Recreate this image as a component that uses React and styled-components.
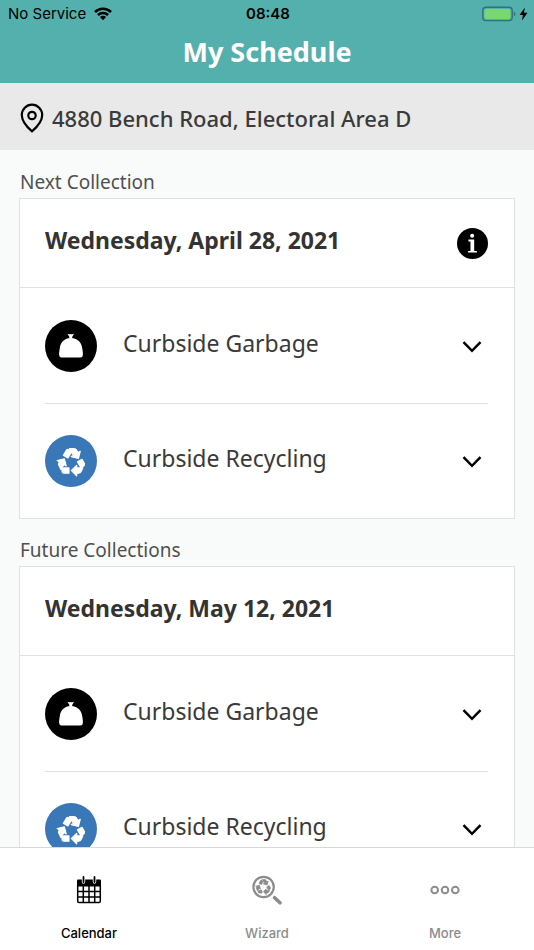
import React from 'react';
import styled, { createGlobalStyle } from 'styled-components';
import { MdRecycling } from 'react-icons/md';

const GlobalStyle = createGlobalStyle`
  * {
    box-sizing: border-box;
  }

  body {
    margin: 0;
    background: #f9fbfa;
    color: #3a3a3a;
    font-family: "Noto Sans", "Open Sans", sans-serif;
  }

  button {
    padding: 0;
    border: 0;
    background: none;
    color: inherit;
    font: inherit;
    cursor: pointer;
  }
`;

const Screen = styled.div`
  display: flex;
  flex-direction: column;
  height: 100vh;
`;

const TopBar = styled.header`
  flex: none;
  background: #53b0ac;
`;

const StatusBar = styled.div`
  display: grid;
  grid-template-columns: 1fr auto 1fr;
  align-items: center;
  height: 28px;
  padding: 0 6px 0 8px;
  color: #000;
  font-family: Inter, sans-serif;
  font-size: 15px;
  line-height: 20px;
`;

const StatusGroup = styled.div`
  display: flex;
  align-items: center;
  justify-content: ${(props) => (props.$end ? 'flex-end' : 'flex-start')};
  gap: ${(props) => (props.$end ? '3px' : '8px')};
`;

const Clock = styled.time`
  font-weight: 600;
`;

const Title = styled.h1`
  margin: 0;
  padding: 6px 0 13px;
  color: #fff;
  font-size: 27px;
  font-weight: 700;
  line-height: 36px;
  text-align: center;
`;

const AddressBar = styled.div`
  display: flex;
  flex: none;
  align-items: center;
  gap: 8px;
  padding: 19px 20px 16px;
  background: #e9e9e9;
  font-size: 22px;
  font-weight: 500;
  line-height: 32px;
`;

const Content = styled.main`
  flex: 1;
  min-height: 0;
  padding: 1px 19px 0;
  overflow: hidden auto;
  scrollbar-width: none;
`;

const SectionLabel = styled.h2`
  margin: 0;
  padding: 17px 1px 2px;
  color: #505050;
  font-size: 19px;
  font-weight: 400;
  line-height: 28px;
`;

const Card = styled.article`
  border: 1px solid #e0e2e2;
  background: #fff;
`;

const CardHead = styled.div`
  display: flex;
  align-items: center;
  justify-content: space-between;
  height: 89px;
  padding: 0 26px 0 25px;
  border-bottom: 1px solid #e0e2e2;
`;

const CardDate = styled.h3`
  margin: 0;
  padding-bottom: 6px;
  color: #333;
  font-size: 23px;
  font-weight: 700;
  line-height: 32px;
`;

const InfoButton = styled.button`
  display: flex;
  color: #000;
`;

const Pickups = styled.ul`
  margin: 0;
  padding: 0 26px 0 25px;
  list-style: none;
`;

const Pickup = styled.li`
  height: 115px;

  & + & {
    border-top: 1px solid #e0e2e2;
  }
`;

const PickupButton = styled.button`
  display: flex;
  align-items: center;
  width: 100%;
  height: 100%;
  gap: 26px;
  text-align: left;
`;

const Badge = styled.span`
  display: flex;
  flex: none;
  align-items: center;
  justify-content: center;
  width: 52px;
  height: 52px;
  border-radius: 50%;
  background: ${(props) => props.$color};
  color: #fff;
`;

const RecycleIcon = styled(MdRecycling)`
  stroke: currentColor;
  stroke-width: 1;
  stroke-linejoin: round;

  /* the icon's own bounding box */
  path[fill="none"] {
    stroke: none;
  }
`;

const PickupName = styled.span`
  flex: 1;
  padding-bottom: 6px;
  font-size: 23px;
  line-height: 32px;
`;

const Chevron = styled.svg`
  width: 20px;
  height: 20px;
  margin-right: 6px;
`;

const TabBar = styled.nav`
  display: grid;
  flex: none;
  grid-template-columns: repeat(3, 1fr);
  border-top: 1px solid #d8d8d8;
  background: #fff;
`;

const Tab = styled.a`
  display: flex;
  flex-direction: column;
  align-items: center;
  gap: 18px;
  padding: 27px 0 7px;
  color: ${(props) => (props.$active ? '#000' : '#8c8c8c')};
  font-family: Inter, sans-serif;
  font-size: 13px;
  font-weight: 500;
  line-height: 20px;
  text-decoration: none;
`;

const TabIcon = styled.svg`
  width: 30px;
  height: 30px;
`;

const WifiIcon = () => (
  <svg width="18" height="14" viewBox="0 0 18 14" aria-hidden="true">
    <g fill="none" stroke="#000" strokeWidth="2.5">
      <path d="M1 5A11.4 11.4 0 0 1 17 5" />
      <path d="M3.9 8A7.3 7.3 0 0 1 14.1 8" />
    </g>
    <path d="M5.9 10.1A4.4 4.4 0 0 1 12.1 10.1L9 13.3Z" />
  </svg>
);

const BatteryIcon = () => (
  <svg width="34" height="16" viewBox="0 0 34 16" role="img" aria-label="Battery charging">
    <rect x="0.8" y="1.2" width="29.4" height="13.4" rx="3.4" fill="none" stroke="#2f7375" strokeWidth="1.4" />
    <rect x="2.5" y="2.9" width="26" height="10" rx="1.8" fill="#78d770" />
    <path d="M31.8 5.6Q33.4 6.2 33.4 7.9T31.8 10.2Z" fill="#2f7375" />
  </svg>
);

const BoltIcon = () => (
  <svg width="9" height="14" viewBox="0 0 9 14" aria-hidden="true">
    <path d="M5.8 0.5L0.6 8H3.9L3 13.5L8.5 5.7H5Z" />
  </svg>
);

const PinIcon = () => (
  <svg width="24" height="30" viewBox="0 0 24 30" fill="none" stroke="#000" strokeWidth="2.2" aria-hidden="true">
    <path d="M12 28.3C8.8 25.6 1.8 19 1.8 12A10.2 10.4 0 0 1 22.2 12C22.2 19 15.2 25.6 12 28.3Z" strokeLinejoin="round" />
    <circle cx="12" cy="12.5" r="3.7" />
  </svg>
);

const InfoIcon = () => (
  <svg width="31" height="31" viewBox="0 0 92 92" aria-hidden="true">
    <circle cx="46" cy="46" r="46" />
    <circle cx="45" cy="23" r="6" fill="#fff" />
    <path d="M34 34H51V68H59V73H33V68H40V40H34Z" fill="#fff" />
  </svg>
);

const BagIcon = () => (
  <svg width="26" height="26" viewBox="0 0 26 26" fill="currentColor" aria-hidden="true">
    <path d="M9.4 0.8Q11.1 1.5 12.7 0.9Q14.4 1.5 16 0.8L14.2 3.9V5.1C19.5 6 23.2 9 24.1 14.5C24.6 17.6 25.2 20.2 24.8 22.2Q24.5 24.4 22.6 24.6H3.4Q1.5 24.4 1.2 22.2C0.8 20.2 1.5 17.6 1.9 14.5C2.8 9 6.4 6 11.4 5.1V3.9Z" />
  </svg>
);

const CalendarIcon = () => (
  <TabIcon viewBox="-2 -1 30 30" aria-hidden="true">
    <path d="M1 4.5Q1 3.4 2.1 3.4H23.9Q25 3.4 25 4.5V9H1Z" />
    <path d="M7.5 1V6M18.5 1V6" stroke="#fff" strokeWidth="3.4" strokeLinecap="round" />
    <path d="M7.5 1V6M18.5 1V6" stroke="#000" strokeWidth="1.8" strokeLinecap="round" />
    <path
      d="M1.7 9.8H24.3V25.2Q24.3 26.6 22.9 26.6H3.1Q1.7 26.6 1.7 25.2ZM7.3 10V26.6M13 10V26.6M18.7 10V26.6M1.7 15.4H24.3M1.7 21H24.3"
      fill="none"
      stroke="#000"
      strokeWidth="1.5"
    />
  </TabIcon>
);

const WizardIcon = () => (
  <TabIcon viewBox="0 0 30 30" fill="none" stroke="currentColor" aria-hidden="true">
    <circle cx="11.6" cy="12" r="10.2" strokeWidth="2.2" />
    <RecycleIcon x="2.9" y="3.2" size="17" />
    <path d="M22.6 22.7L28 27.8" strokeWidth="3.6" strokeLinecap="round" />
  </TabIcon>
);

const MoreIcon = () => (
  <TabIcon viewBox="0 0 30 30" fill="none" stroke="currentColor" strokeWidth="2" aria-hidden="true">
    <circle cx="4.7" cy="15" r="3.3" />
    <circle cx="15" cy="15" r="3.3" />
    <circle cx="25.3" cy="15" r="3.3" />
  </TabIcon>
);

const pickupTypes = [
  { name: 'Curbside Garbage', color: '#000', icon: <BagIcon /> },
  { name: 'Curbside Recycling', color: '#3a77b7', icon: <RecycleIcon size={31} /> },
];

const Collection = ({ label, date, info }) => (
  <section>
    <SectionLabel>{label}</SectionLabel>
    <Card>
      <CardHead>
        <CardDate>{date}</CardDate>
        {
          info &&
          <InfoButton aria-label="Collection information">
            <InfoIcon />
          </InfoButton>
        }
      </CardHead>
      <Pickups>
        {pickupTypes.map((type) => (
          <Pickup key={type.name}>
            <PickupButton aria-expanded="false">
              <Badge $color={type.color}>{type.icon}</Badge>
              <PickupName>{type.name}</PickupName>
              <Chevron viewBox="0 0 20 20" fill="none" stroke="#000" strokeWidth="2.5" aria-hidden="true">
                <path d="M1.5 6.2L10 14.8L18.5 6.2" />
              </Chevron>
            </PickupButton>
          </Pickup>
        ))}
      </Pickups>
    </Card>
  </section>
);

const App = () => (
  <Screen>
    <GlobalStyle />
    <TopBar>
      <StatusBar>
        <StatusGroup>
          <span>No Service</span>
          <WifiIcon />
        </StatusGroup>
        <Clock>08:48</Clock>
        <StatusGroup $end>
          <BatteryIcon />
          <BoltIcon />
        </StatusGroup>
      </StatusBar>
      <Title>My Schedule</Title>
    </TopBar>
    <AddressBar>
      <PinIcon />
      <span>4880 Bench Road, Electoral Area D</span>
    </AddressBar>
    <Content>
      <Collection label="Next Collection" date="Wednesday, April 28, 2021" info />
      <Collection label="Future Collections" date="Wednesday, May 12, 2021" />
    </Content>
    <TabBar>
      <Tab href="#calendar" $active aria-current="page">
        <CalendarIcon />
        Calendar
      </Tab>
      <Tab href="#wizard">
        <WizardIcon />
        Wizard
      </Tab>
      <Tab href="#more">
        <MoreIcon />
        More
      </Tab>
    </TabBar>
  </Screen>
);

export default App;
